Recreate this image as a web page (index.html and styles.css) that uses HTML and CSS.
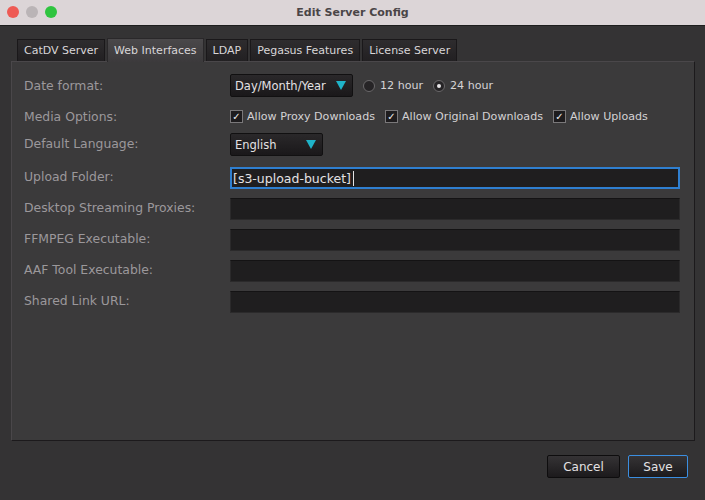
FILE: index.html
```html
<!DOCTYPE html>
<html lang="en">
<head>
  <meta charset="UTF-8">
  <title>Edit Server Config</title>
  <link rel="stylesheet" href="styles.css">
</head>
<body>
  <div class="window">
    <div class="titlebar">
      <div class="lights">
        <span class="light red"></span>
        <span class="light grey"></span>
        <span class="light green"></span>
      </div>
      <div class="title">Edit Server Config</div>
    </div>

    <div class="content">
      <div class="tabs">
        <div class="tab">CatDV Server</div>
        <div class="tab active">Web Interfaces</div>
        <div class="tab">LDAP</div>
        <div class="tab">Pegasus Features</div>
        <div class="tab">License Server</div>
      </div>

      <div class="panel">
        <div class="row">
          <div class="label">Date format:</div>
          <div class="field inline">
            <div class="select date-select">Day/Month/Year <span class="arrow"></span></div>
            <label class="radio"><span class="radio-dot"></span>12 hour</label>
            <label class="radio"><span class="radio-dot on"></span>24 hour</label>
          </div>
        </div>

        <div class="row media">
          <div class="label">Media Options:</div>
          <div class="field inline">
            <label class="check"><span class="box">&#10003;</span>Allow Proxy Downloads</label>
            <label class="check"><span class="box">&#10003;</span>Allow Original Downloads</label>
            <label class="check"><span class="box">&#10003;</span>Allow Uploads</label>
          </div>
        </div>

        <div class="row lang">
          <div class="label">Default Language:</div>
          <div class="field inline">
            <div class="select lang-select">English <span class="arrow"></span></div>
          </div>
        </div>

        <div class="row text-row">
          <div class="label">Upload Folder:</div>
          <div class="field"><div class="input focused">[s3-upload-bucket]<span class="caret"></span></div></div>
        </div>
        <div class="row text-row">
          <div class="label">Desktop Streaming Proxies:</div>
          <div class="field"><div class="input"></div></div>
        </div>
        <div class="row text-row">
          <div class="label">FFMPEG Executable:</div>
          <div class="field"><div class="input"></div></div>
        </div>
        <div class="row text-row">
          <div class="label">AAF Tool Executable:</div>
          <div class="field"><div class="input"></div></div>
        </div>
        <div class="row text-row">
          <div class="label">Shared Link URL:</div>
          <div class="field"><div class="input"></div></div>
        </div>
      </div>

      <div class="footer">
        <button class="btn">Cancel</button>
        <button class="btn primary">Save</button>
      </div>
    </div>
  </div>
</body>
</html>
```

FILE: styles.css
```css
body {
  margin: 0;
  width: 705px;
  height: 500px;
  overflow: hidden;
  font-family: "DejaVu Sans", "Liberation Sans", sans-serif;
  background-color: #333233;
}

.window {
  height: 500px;
  display: flex;
  flex-direction: column;
}

.titlebar {
  height: 25px;
  background-color: #dcd5d7;
  border-bottom: 1px solid #1e1e1e;
  position: relative;
  display: flex;
  align-items: center;
  justify-content: center;
}

.lights {
  position: absolute;
  left: 7px;
  top: 6px;
  display: flex;
  gap: 7px;
}

.light {
  width: 12px;
  height: 12px;
  border-radius: 50%;
}

.light.red { background-color: #ee5a54; }
.light.grey { background-color: #bab4b6; }
.light.green { background-color: #2fc43f; }

.title {
  font-size: 11px;
  font-weight: bold;
  color: #4a4547;
}

.content {
  flex: 1;
  background-color: #343334;
  padding: 12px 10px 0 11px;
}

.tabs {
  display: flex;
  padding-left: 6px;
  gap: 2px;
  height: 23px;
  align-items: flex-end;
}

.tab {
  height: 22px;
  padding: 0 6px;
  display: flex;
  align-items: center;
  font-size: 11px;
  color: #d8d6d8;
  background: linear-gradient(#2e2c2e, #222022);
  border: 1px solid #1a181a;
  border-bottom: none;
  box-sizing: border-box;
  white-space: nowrap;
}

.tab.active {
  height: 24px;
  background: linear-gradient(#4a484a, #3c3a3c);
  border-color: #2a282a;
  margin-bottom: -1px;
  position: relative;
}

.panel {
  height: 380px;
  box-sizing: border-box;
  background-color: #3b3a3b;
  border: 1px solid #4a474a;
  border-right-color: #1c1a1c;
  border-bottom-color: #1c1a1c;
  padding: 12px 14px 0 12px;
}

.row {
  display: flex;
  align-items: center;
  height: 23px;
  margin-bottom: 8px;
}

.row.media {
  height: 22px;
  margin-bottom: 6px;
}

.row.lang {
  margin-bottom: 11px;
}

.row.lang .label {
  padding-bottom: 3px;
}

.row.text-row {
  height: 22px;
  margin-bottom: 9px;
}

.row.text-row .label {
  padding-bottom: 4px;
}

.label {
  width: 206px;
  flex: none;
  font-size: 12.4px;
  color: #9b989b;
  white-space: nowrap;
}

.field {
  flex: 1;
}

.field.inline {
  display: flex;
  align-items: center;
  gap: 10px;
}

.select {
  height: 23px;
  box-sizing: border-box;
  display: flex;
  align-items: center;
  justify-content: space-between;
  padding: 0 4px 0 4px;
  font-size: 11.5px;
  color: #e4e2e4;
  background: linear-gradient(#2a282a, #1a181a);
  border: 1px solid #111011;
  border-radius: 2px;
  white-space: nowrap;
}

.date-select { width: 123px; }
.lang-select { width: 93px; }

.arrow {
  width: 0;
  height: 0;
  border-left: 5px solid transparent;
  border-right: 5px solid transparent;
  border-top: 9px solid #1fb3c8;
  margin-right: 2px;
}

.radio, .check {
  display: flex;
  align-items: center;
  font-size: 11.1px;
  color: #d4d2d4;
  white-space: nowrap;
}

.radio { gap: 5px; }

.radio-dot {
  width: 10px;
  height: 10px;
  border-radius: 50%;
  background-color: #262426;
  border: 1px solid #6a686a;
  position: relative;
}

.radio-dot.on::after {
  content: "";
  position: absolute;
  left: 3px;
  top: 3px;
  width: 4px;
  height: 4px;
  border-radius: 50%;
  background-color: #e8e6e8;
}

.check { gap: 4px; }

.box {
  width: 11px;
  height: 11px;
  border: 1px solid #7a787a;
  background-color: #1e1c1e;
  font-size: 10px;
  line-height: 11px;
  text-align: center;
  color: #f0eef0;
}

.input {
  height: 22px;
  box-sizing: border-box;
  background-color: #1f1e1f;
  border: 1px solid #2b2a2b;
  border-top-color: #141314;
  font-size: 12.5px;
  color: #e4e2e4;
  padding: 2px 2px;
  display: flex;
  align-items: center;
}

.input.focused {
  border: 2px solid #2f7fd0;
  padding: 0 1px;
}

.caret {
  width: 1px;
  height: 15px;
  background-color: #e4e2e4;
  margin-left: 2px;
}

.footer {
  display: flex;
  justify-content: flex-end;
  gap: 8px;
  padding: 14px 7px 0 0;
}

.btn {
  height: 23px;
  padding: 0 12px;
  font-family: "DejaVu Sans", "Liberation Sans", sans-serif;
  font-size: 12px;
  color: #e4e2e4;
  background: linear-gradient(#353335, #1c1a1c);
  border: 1px solid #0e0d0e;
  border-radius: 2px;
}

.btn:first-child { width: 73px; }

.btn.primary {
  width: 60px;
  border: 1px solid #3b8ee0;
}
```
